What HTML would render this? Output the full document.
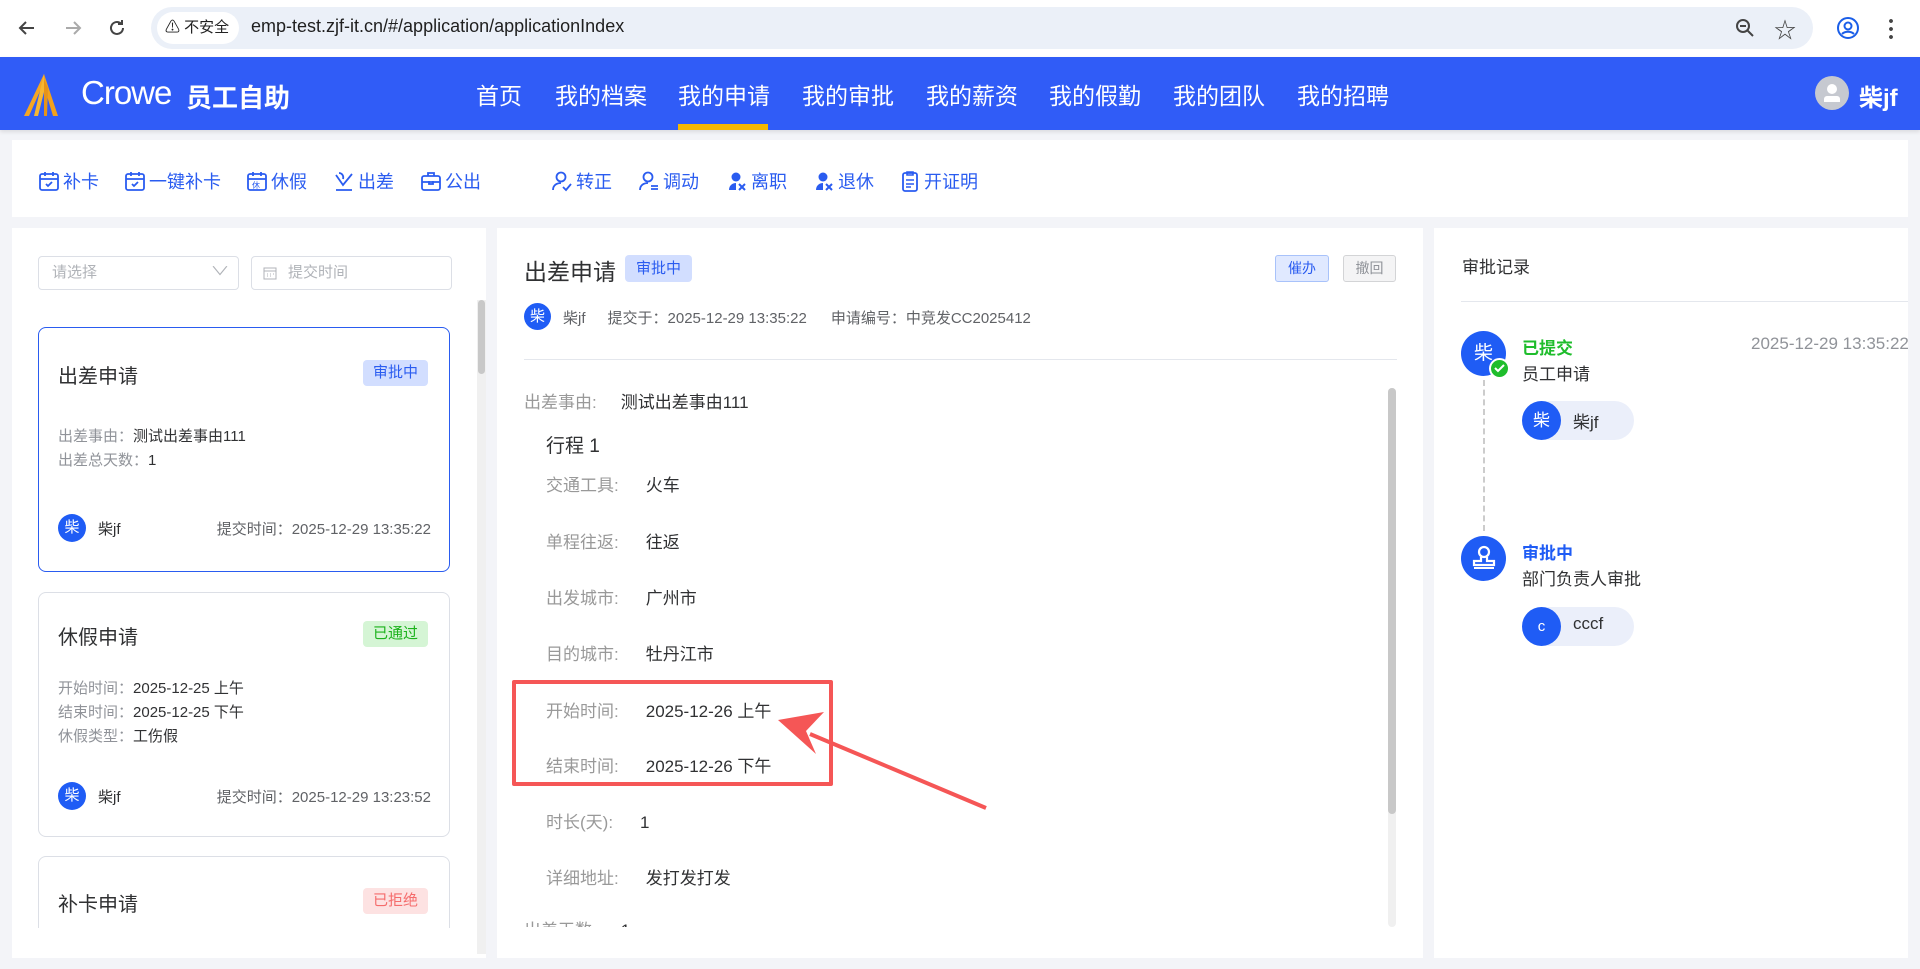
<!DOCTYPE html>
<html><head><meta charset="utf-8"><style>
*{margin:0;padding:0;box-sizing:border-box}
html{width:1920px;height:969px;overflow:hidden}
body{width:1920px;height:969px;overflow:hidden;background:#f3f4f8;font-family:"Liberation Sans","Noto Sans CJK SC",sans-serif;position:relative;color:#303133}
.a{position:absolute;white-space:nowrap}
.nav{top:77px;font-size:23px;color:#fff}
.tb{top:168px;font-size:18px;color:#2a5cf0;display:flex;align-items:center;gap:3px}
.tb svg{width:22px;height:22px}
.panel{position:absolute;background:#fff}
.card{position:absolute;left:38px;width:412px;border:1px solid #dcdfe6;border-radius:8px;background:#fff}
.ct{position:absolute;left:19px;font-size:20px;color:#303133}
.tag{position:absolute;font-size:15px;padding:0 10px;height:26px;line-height:26px;border-radius:4px}
.cl{position:absolute;left:19px;font-size:15px;color:#909399}
.cl b{font-weight:normal;color:#303133}
.av{position:absolute;border-radius:50%;background:#1f5cf5;color:#fff;text-align:center}
.lb{color:#999;font-size:17px}
.vl{color:#303133;font-size:17px}
</style></head><body>
<!-- browser bar -->
<div class="a" style="left:0;top:0;width:1920px;height:57px;background:#fff"></div>
<svg class="a" style="left:16px;top:17px" width="22" height="22" viewBox="0 0 22 22"><path d="M18 11H5M10 5l-6 6 6 6" stroke="#444" stroke-width="2" fill="none"/></svg>
<svg class="a" style="left:62px;top:17px" width="22" height="22" viewBox="0 0 22 22"><path d="M4 11h13M12 5l6 6-6 6" stroke="#aaa" stroke-width="2" fill="none"/></svg>
<svg class="a" style="left:106px;top:17px" width="22" height="22" viewBox="0 0 22 22"><path d="M17 11a6 6 0 1 1-2-4.5M16 3v4h-4" stroke="#444" stroke-width="2" fill="none"/></svg>
<div class="a" style="left:151px;top:7px;width:1662px;height:42px;border-radius:21px;background:#ebf0f8"></div>
<div class="a" style="left:157px;top:12px;width:82px;height:32px;border-radius:16px;background:#fff;font-size:15px;line-height:32px;padding-left:8px;color:#222">⚠ 不安全</div>
<div class="a" style="left:251px;top:16px;font-size:18px;color:#1f1f1f">emp-test.zjf-it.cn/#/application/applicationIndex</div>
<svg class="a" style="left:1734px;top:17px" width="22" height="22" viewBox="0 0 22 22"><circle cx="9" cy="9" r="6" stroke="#444" stroke-width="2" fill="none"/><path d="M13 13l6 6M6 9h6" stroke="#444" stroke-width="2"/></svg>
<div class="a" style="left:1774px;top:13px;font-size:22px;color:#444">☆</div>
<svg class="a" style="left:1836px;top:16px" width="24" height="24" viewBox="0 0 24 24"><circle cx="12" cy="12" r="10" stroke="#1a5ee8" stroke-width="2" fill="none"/><circle cx="12" cy="10" r="3.5" stroke="#1a5ee8" stroke-width="2" fill="none"/><path d="M6 18c3-3 9-3 12 0" stroke="#1a5ee8" stroke-width="2" fill="none"/></svg>
<div class="a" style="left:1889px;top:17px;width:4px;height:22px;background:radial-gradient(circle,#444 1.8px,transparent 2px) 0 0/4px 8px"></div>
<!-- header -->
<div class="a" style="left:0;top:57px;width:1920px;height:73px;background:#305cf7;box-shadow:0 2px 4px rgba(0,0,0,.1)"></div>
<svg class="a" style="left:22px;top:72px" width="50" height="44" viewBox="0 0 50 44"><path d="M22 2L2 44h5L22 10z" fill="#f5a623"/><path d="M22 2L12 44h4L24 12z" fill="#f7b733"/><path d="M22 2l14 42h-5L22 14z" fill="#f2a11c"/><path d="M22 8L22 44h3L26 16z" fill="#e6931a"/></svg>
<div class="a" style="left:81px;top:74px;font-size:33px;color:#fff;letter-spacing:-1px">Crowe</div>
<div class="a" style="left:186px;top:78px;font-size:26px;color:#fff;font-weight:bold">员工自助</div>
<div class="a nav" style="left:476px">首页</div>
<div class="a nav" style="left:555px">我的档案</div>
<div class="a nav" style="left:678px">我的申请</div>
<div class="a nav" style="left:802px">我的审批</div>
<div class="a nav" style="left:926px">我的薪资</div>
<div class="a nav" style="left:1049px">我的假勤</div>
<div class="a nav" style="left:1173px">我的团队</div>
<div class="a nav" style="left:1297px">我的招聘</div>
<div class="a" style="left:678px;top:124px;width:90px;height:6px;background:#f5b800"></div>
<div class="a" style="left:1815px;top:76px;width:34px;height:34px;border-radius:50%;background:#c6c9d0"></div>
<div class="a" style="left:1827px;top:84px;width:10px;height:10px;border-radius:50%;background:#fff"></div>
<div class="a" style="left:1824px;top:96px;width:16px;height:6px;border-radius:3px 3px 0 0;background:#fff"></div>
<div class="a" style="left:1859px;top:78px;font-size:24px;font-weight:bold;color:#fff">柴jf</div>
<!-- toolbar -->
<div class="panel" style="left:12px;top:140px;width:1896px;height:77px"></div>
<div class="a tb" style="left:38px"><svg viewBox="0 0 22 22"><rect x="2" y="4" width="18" height="16" rx="2" stroke="#2a5cf0" stroke-width="1.8" fill="none"/><path d="M2 9h18M7 2v4M15 2v4M8 14l2 2 4-4" stroke="#2a5cf0" stroke-width="1.8" fill="none"/></svg>补卡</div>
<div class="a tb" style="left:124px"><svg viewBox="0 0 22 22"><rect x="2" y="4" width="18" height="16" rx="2" stroke="#2a5cf0" stroke-width="1.8" fill="none"/><path d="M2 9h18M7 2v4M15 2v4M8 14l2 2 4-4" stroke="#2a5cf0" stroke-width="1.8" fill="none"/></svg>一键补卡</div>
<div class="a tb" style="left:246px"><svg viewBox="0 0 22 22"><rect x="2" y="4" width="18" height="16" rx="2" stroke="#2a5cf0" stroke-width="1.8" fill="none"/><path d="M2 9h18M7 2v4M15 2v4" stroke="#2a5cf0" stroke-width="1.8"/><text x="6" y="18" font-size="8" fill="#2a5cf0">休</text></svg>休假</div>
<div class="a tb" style="left:333px"><svg viewBox="0 0 22 22"><path d="M3 5l7 10 9-11M6 3c3 0 5 3 4 6M3 20h16" stroke="#2a5cf0" stroke-width="1.8" fill="none"/></svg>出差</div>
<div class="a tb" style="left:420px"><svg viewBox="0 0 22 22"><rect x="2" y="6" width="18" height="14" rx="2" stroke="#2a5cf0" stroke-width="1.8" fill="none"/><path d="M8 6V3h6v3M2 12h18M9 11v3h4v-3" stroke="#2a5cf0" stroke-width="1.8" fill="none"/></svg>公出</div>
<div class="a tb" style="left:551px"><svg viewBox="0 0 22 22"><circle cx="10" cy="7" r="4.5" stroke="#2a5cf0" stroke-width="1.8" fill="none"/><path d="M2 20c0-5 4-7 8-7M12 17l3 3 5-6" stroke="#2a5cf0" stroke-width="1.8" fill="none"/></svg>转正</div>
<div class="a tb" style="left:638px"><svg viewBox="0 0 22 22"><circle cx="10" cy="7" r="4.5" stroke="#2a5cf0" stroke-width="1.8" fill="none"/><path d="M2 20c0-5 4-7 8-7M13 16h7M13 19h7" stroke="#2a5cf0" stroke-width="1.8" fill="none"/></svg>调动</div>
<div class="a tb" style="left:726px"><svg viewBox="0 0 22 22"><circle cx="10" cy="7" r="4.5" fill="#2a5cf0"/><path d="M3 20c0-5 4-7 7-7v7z" fill="#2a5cf0"/><path d="M13 14l6 6M19 14l-6 6" stroke="#2a5cf0" stroke-width="2"/></svg>离职</div>
<div class="a tb" style="left:813px"><svg viewBox="0 0 22 22"><circle cx="10" cy="7" r="4.5" fill="#2a5cf0"/><path d="M3 20c0-5 4-7 7-7v7z" fill="#2a5cf0"/><path d="M13 14l6 6M19 14l-6 6" stroke="#2a5cf0" stroke-width="2"/></svg>退休</div>
<div class="a tb" style="left:899px"><svg viewBox="0 0 22 22"><rect x="4" y="3" width="14" height="18" rx="2" stroke="#2a5cf0" stroke-width="1.8" fill="none"/><path d="M8 2h6v3H8zM7 10h8M7 14h8M7 17h5" stroke="#2a5cf0" stroke-width="1.6" fill="none"/></svg>开证明</div>
<!-- left panel -->
<div class="panel" style="left:12px;top:228px;width:474px;height:730px"></div>
<div class="a" style="left:38px;top:256px;width:201px;height:34px;border:1px solid #dcdfe6;border-radius:4px;font-size:15px;color:#b0b3b8;line-height:32px;padding-left:13px">请选择<span style="position:absolute;right:12px;top:-2px;font-size:12px;transform:scaleX(1.6)">∨</span></div>
<div class="a" style="left:251px;top:256px;width:201px;height:34px;border:1px solid #dcdfe6;border-radius:4px;font-size:15px;color:#b0b3b8;line-height:32px;padding-left:36px">提交时间</div>
<svg class="a" style="left:263px;top:266px" width="14" height="14" viewBox="0 0 14 14"><rect x="1" y="2" width="12" height="11" stroke="#b0b3b8" fill="none"/><path d="M1 5h12M4 8h1M7 8h1M10 8h1M4 10h1M7 10h1" stroke="#b0b3b8"/></svg>
<div class="a" style="left:477px;top:300px;width:9px;height:654px;background:#f0f0f0"></div>
<div class="a" style="left:478px;top:300px;width:7px;height:74px;border-radius:4px;background:#c8c8c8"></div>
<div style="position:absolute;left:0;top:0;width:486px;height:928px;overflow:hidden">
<div class="card" style="top:327px;height:245px;border-color:#2a5cf0">
<div class="ct" style="top:32px">出差申请</div>
<div class="tag" style="left:324px;top:32px;background:#d2deff;color:#2a5cf0">审批中</div>
<div class="cl" style="top:97px">出差事由：<b>测试出差事由111</b></div>
<div class="cl" style="top:121px">出差总天数：<b>1</b></div>
<div class="av" style="left:19px;top:186px;width:28px;height:28px;line-height:28px;font-size:15px">柴</div>
<div class="cl" style="left:59px;top:190px;color:#303133">柴jf</div>
<div class="cl" style="left:auto;right:18px;top:190px;color:#606266">提交时间：2025-12-29 13:35:22</div>
</div>
<div class="card" style="top:592px;height:245px">
<div class="ct" style="top:28px">休假申请</div>
<div class="tag" style="left:324px;top:28px;background:#d5f5d5;color:#1bb21b">已通过</div>
<div class="cl" style="top:84px">开始时间：<b>2025-12-25 上午</b></div>
<div class="cl" style="top:108px">结束时间：<b>2025-12-25 下午</b></div>
<div class="cl" style="top:132px">休假类型：<b>工伤假</b></div>
<div class="av" style="left:19px;top:189px;width:28px;height:28px;line-height:28px;font-size:15px">柴</div>
<div class="cl" style="left:59px;top:193px;color:#303133">柴jf</div>
<div class="cl" style="left:auto;right:18px;top:193px;color:#606266">提交时间：2025-12-29 13:23:52</div>
</div>
<div class="card" style="top:856px;height:72px;border-bottom:none;border-radius:8px 8px 0 0">
<div class="ct" style="top:31px">补卡申请</div>
<div class="tag" style="left:324px;top:31px;background:#fde2e2;color:#f56c6c">已拒绝</div>
</div>
</div>
<!-- middle panel -->
<div class="panel" style="left:497px;top:228px;width:926px;height:730px"></div>
<div class="a" style="left:524px;top:253px;font-size:23px;color:#303133">出差申请</div>
<div class="a" style="left:625px;top:255px;width:67px;height:27px;border-radius:4px;background:#d2deff;color:#2a5cf0;font-size:15px;line-height:27px;text-align:center">审批中</div>
<div class="a" style="left:1275px;top:255px;width:54px;height:27px;border-radius:3px;background:#e0e9ff;border:1px solid #a8c2fa;color:#2a5cf0;font-size:14px;line-height:25px;text-align:center">催办</div>
<div class="a" style="left:1343px;top:255px;width:53px;height:27px;border-radius:3px;background:#f4f4f5;border:1px solid #d3d4d6;color:#909399;font-size:14px;line-height:25px;text-align:center">撤回</div>
<div class="av" style="left:524px;top:303px;width:27px;height:27px;line-height:27px;font-size:15px">柴</div>
<div class="a" style="left:563px;top:307px;font-size:15px;color:#606266">柴jf<span style="margin-left:22px">提交于：2025-12-29 13:35:22</span><span style="margin-left:24px">申请编号：中竞发CC2025412</span></div>
<div class="a" style="left:524px;top:359px;width:873px;height:1px;background:#e4e7ed"></div>
<div class="a" style="left:524px;top:388px;font-size:17px"><span class="lb">出差事由:</span><span class="vl" style="margin-left:24px">测试出差事由111</span></div>
<div style="position:absolute;left:497px;top:380px;width:890px;height:547px;overflow:hidden">
<div class="a" style="left:49px;top:51px;font-size:19px;color:#303133">行程 1</div>
<div class="a" style="left:49px;top:91px"><span class="lb">交通工具:</span><span class="vl" style="margin-left:27px">火车</span></div>
<div class="a" style="left:49px;top:148px"><span class="lb">单程往返:</span><span class="vl" style="margin-left:27px">往返</span></div>
<div class="a" style="left:49px;top:204px"><span class="lb">出发城市:</span><span class="vl" style="margin-left:27px">广州市</span></div>
<div class="a" style="left:49px;top:260px"><span class="lb">目的城市:</span><span class="vl" style="margin-left:27px">牡丹江市</span></div>
<div class="a" style="left:49px;top:317px"><span class="lb">开始时间:</span><span class="vl" style="margin-left:27px">2025-12-26 上午</span></div>
<div class="a" style="left:49px;top:372px"><span class="lb">结束时间:</span><span class="vl" style="margin-left:27px">2025-12-26 下午</span></div>
<div class="a" style="left:49px;top:428px"><span class="lb">时长(天):</span><span class="vl" style="margin-left:27px">1</span></div>
<div class="a" style="left:49px;top:484px"><span class="lb">详细地址:</span><span class="vl" style="margin-left:27px">发打发打发</span></div>
<div class="a" style="left:27px;top:536px"><span class="lb">出差天数:</span><span class="vl" style="margin-left:24px">1</span></div>
</div>
<div class="a" style="left:1388px;top:388px;width:8px;height:539px;border-radius:4px;background:#f0f0f0"></div>
<div class="a" style="left:1388px;top:388px;width:8px;height:426px;border-radius:4px;background:#c8c8c8"></div>
<!-- red box & arrow -->
<div class="a" style="left:512px;top:680px;width:321px;height:106px;border:4px solid #f55656;border-radius:2px"></div>
<svg class="a" style="left:770px;top:710px" width="230" height="110" viewBox="0 0 230 110"><path d="M216 98L40 24" stroke="#f55656" stroke-width="4"/><path d="M8 10L54 2L36 21L46 44Z" fill="#f55656"/></svg>
<!-- right panel -->
<div class="panel" style="left:1434px;top:228px;width:474px;height:730px"></div>
<div class="a" style="left:1462px;top:253px;font-size:17px;color:#303133">审批记录</div>
<div class="a" style="left:1461px;top:301px;width:447px;height:1px;background:#e4e7ed"></div>
<div class="a" style="left:1483px;top:380px;height:151px;border-left:2px dashed #ccc"></div>
<div class="av" style="left:1461px;top:331px;width:45px;height:45px;line-height:45px;font-size:19px">柴</div>
<div class="a" style="left:1489px;top:358px;width:21px;height:21px;border-radius:50%;background:#1fbd2c;border:2px solid #fff"></div>
<svg class="a" style="left:1493px;top:363px" width="13" height="11" viewBox="0 0 13 11"><path d="M2 5l3 3 6-6" stroke="#fff" stroke-width="2" fill="none"/></svg>
<div class="a" style="left:1522px;top:334px;font-size:17px;font-weight:bold;color:#1fbd2c">已提交</div>
<div class="a" style="left:1741px;top:334px;width:167px;overflow:hidden;font-size:17px;color:#909399;text-align:left;padding-left:10px">2025-12-29 13:35:22</div>
<div class="a" style="left:1522px;top:360px;font-size:17px;color:#303133">员工申请</div>
<div class="a" style="left:1522px;top:401px;width:112px;height:39px;border-radius:20px;background:#ebeffa"></div>
<div class="av" style="left:1522px;top:401px;width:39px;height:39px;line-height:39px;font-size:17px">柴</div>
<div class="a" style="left:1573px;top:408px;font-size:17px;color:#303133">柴jf</div>
<div class="av" style="left:1461px;top:536px;width:45px;height:45px"></div>
<svg class="a" style="left:1469px;top:543px" width="30" height="30" viewBox="0 0 30 30"><circle cx="15" cy="9" r="5" stroke="#fff" stroke-width="2.2" fill="none"/><path d="M12 14v4H5v4h20v-4h-7v-4" stroke="#fff" stroke-width="2.2" fill="none"/><path d="M5 25h20" stroke="#fff" stroke-width="2"/></svg>
<div class="a" style="left:1522px;top:539px;font-size:17px;font-weight:bold;color:#1f5cf5">审批中</div>
<div class="a" style="left:1522px;top:565px;font-size:17px;color:#303133">部门负责人审批</div>
<div class="a" style="left:1522px;top:607px;width:112px;height:39px;border-radius:20px;background:#ebeffa"></div>
<div class="av" style="left:1522px;top:607px;width:39px;height:39px;line-height:39px;font-size:15px">c</div>
<div class="a" style="left:1573px;top:614px;font-size:17px;color:#303133">cccf</div>
</body></html>
